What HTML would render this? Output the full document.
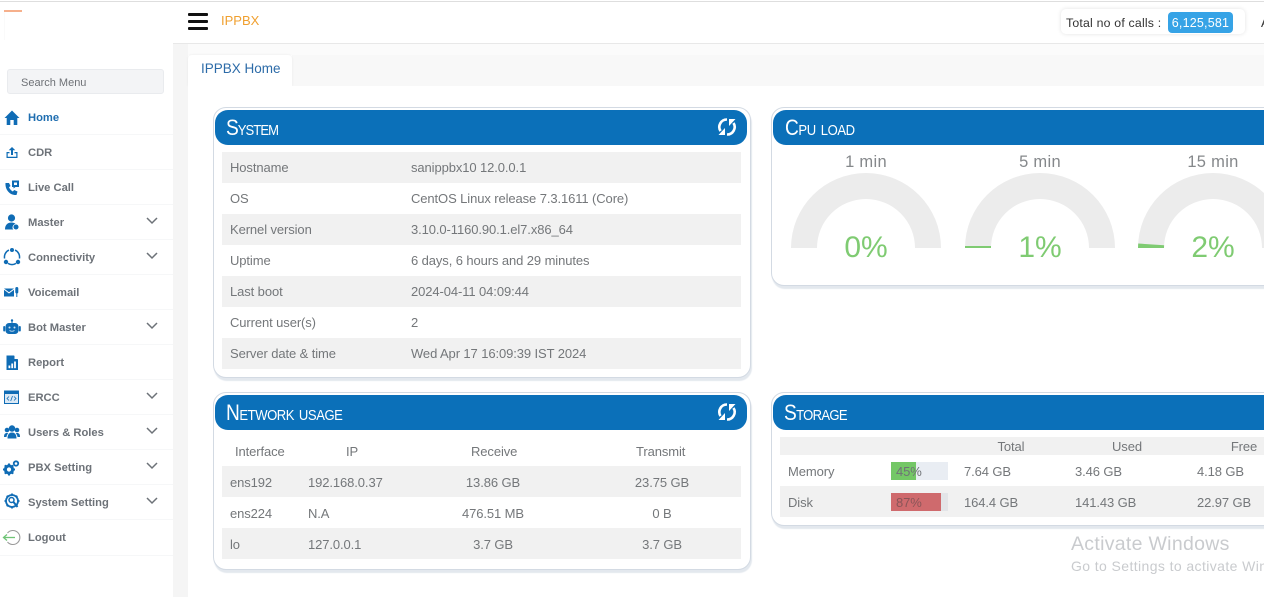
<!DOCTYPE html>
<html><head><meta charset="utf-8"><style>
html,body{margin:0;padding:0;width:1264px;height:597px;overflow:hidden;background:#fff;font-family:"Liberation Sans",sans-serif;color:#6f7276}
.a{position:absolute;white-space:nowrap}
#wrap{position:relative;width:1264px;height:597px;overflow:hidden}
.nav{position:absolute;left:28px;font-size:11.2px;font-weight:bold;color:#6d7278;line-height:14px;white-space:nowrap}
.sep{position:absolute;left:0;width:173px;height:1px;background:#f6f7f8}
.ico{position:absolute}
.panel{position:absolute;background:#fff;border:1px solid #d3dae3;border-radius:13px;box-shadow:1px 3px 1px #e3e8ee;box-sizing:border-box}
.head{position:absolute;background:#0b70b9;border-radius:13px;height:35px}
.title{position:absolute;color:#fff;font-size:22px;font-variant:small-caps;letter-spacing:-1.1px;line-height:24px;white-space:nowrap;transform:scaleX(.87);transform-origin:left center}
.row{position:absolute;height:31px}
.g{background:#f1f1f1}
.t{position:absolute;font-size:13px;line-height:18px;color:#74777a;white-space:nowrap;letter-spacing:-.1px}
.c{transform:translateX(-50%)}
.gl{position:absolute;font-size:16.5px;color:#85888b;white-space:nowrap;transform:translateX(-50%);line-height:20px;letter-spacing:.3px}
.gv{position:absolute;font-size:30px;color:#7fcb72;white-space:nowrap;transform:translateX(-50%);line-height:34px}
</style></head><body><div id="wrap">

<div class="a" style="left:0;top:1px;width:1264px;height:1px;background:#dedede"></div>
<div class="a" style="left:173px;top:43px;width:1091px;height:1px;background:#e8e8e8"></div>
<div class="a" style="left:173px;top:44px;width:15px;height:553px;background:#f5f5f5"></div>
<div class="a" style="left:188px;top:44px;width:1076px;height:11px;background:#fbfbfb"></div>
<div class="a" style="left:292px;top:55px;width:972px;height:31px;background:#f8f8f8"></div>
<div class="a" style="left:188px;top:55px;width:104px;height:31px;background:#fff;border-radius:4px 4px 0 0;box-shadow:0 0 2px #e8e8e8"></div>
<div class="a" style="left:201px;top:60px;font-size:13.5px;line-height:18px;color:#2c6ba8;letter-spacing:0">IPPBX Home</div>
<div class="a" style="left:188px;top:86px;width:1076px;height:511px;background:#fff"></div>

<!-- logo remnant -->
<div class="a" style="left:4px;top:10px;width:18px;height:2px;background:#f6b08c"></div>
<div class="a" style="left:4px;top:12px;width:1px;height:28px;background:#fafafa"></div>

<!-- hamburger -->
<div class="a" style="left:188px;top:13px;width:20px;height:3px;background:#111;border-radius:1px"></div>
<div class="a" style="left:188px;top:20px;width:20px;height:3px;background:#111;border-radius:1px"></div>
<div class="a" style="left:188px;top:27px;width:20px;height:3px;background:#111;border-radius:1px"></div>
<div class="a" style="left:221px;top:12px;font-size:13px;line-height:17px;color:#f0a030">IPPBX</div>

<!-- calls -->
<div class="a" style="left:1061px;top:9px;width:184px;height:25px;background:#fff;border-radius:5px;box-shadow:0 0 4px #e2e2e2"></div>
<div class="a" style="left:1066px;top:15px;font-size:12.3px;line-height:16px;color:#333;letter-spacing:.2px">Total no of calls :</div>
<div class="a" style="left:1168px;top:12px;width:65px;height:21px;background:#36a3e6;border-radius:4px;color:#fff;font-size:12.5px;line-height:22px;text-align:center;letter-spacing:.2px">6,125,581</div>
<div class="a" style="left:1261px;top:15px;font-size:12.5px;line-height:16px;color:#333">A</div>

<!-- search -->
<div class="a" style="left:7px;top:69px;width:157px;height:25px;box-sizing:border-box;background:#f3f4f6;border:1px solid #e9ebee;border-radius:3px"></div>
<div class="a" style="left:21px;top:76px;font-size:11px;line-height:14px;color:#6e7176">Search Menu</div>

<!-- nav -->
<div class="nav" style="top:111px;color:#1f6eb0">Home</div>
<div class="nav" style="top:146px">CDR</div>
<div class="nav" style="top:181px">Live Call</div>
<div class="nav" style="top:216px">Master</div>
<div class="nav" style="top:251px">Connectivity</div>
<div class="nav" style="top:286px">Voicemail</div>
<div class="nav" style="top:321px">Bot Master</div>
<div class="nav" style="top:356px">Report</div>
<div class="nav" style="top:391px">ERCC</div>
<div class="nav" style="top:426px">Users &amp; Roles</div>
<div class="nav" style="top:461px">PBX Setting</div>
<div class="nav" style="top:496px">System Setting</div>
<div class="nav" style="top:531px">Logout</div>
<div class="sep" style="top:134px"></div><div class="sep" style="top:169px"></div><div class="sep" style="top:204px"></div><div class="sep" style="top:239px"></div><div class="sep" style="top:274px"></div><div class="sep" style="top:309px"></div><div class="sep" style="top:344px"></div><div class="sep" style="top:379px"></div><div class="sep" style="top:414px"></div><div class="sep" style="top:449px"></div><div class="sep" style="top:484px"></div><div class="sep" style="top:519px"></div><div class="sep" style="top:555px"></div>

<svg class="ico" style="left:0;top:100px" width="28" height="460" viewBox="0 100 28 460" fill="#0f6cb5">
<!-- home -->
<path d="M12 110.5 L4.5 118 H6.7 V125 H10.3 V120 H13.7 V125 H17.3 V118 H19.5Z"/>
<!-- cdr -->
<path d="M12 147 L8.7 150.3 H11 V155 H13 V150.3 H15.3Z"/><path d="M6.5 152 H9.5 V153.2 H7.7 V156.8 H16.3 V153.2 H14.5 V152 H17.5 V158 H6.5Z"/>
<!-- live call -->
<path d="M5.5 183 C5 190 10 195.5 16.5 195 L17.5 191.5 L14.2 190 L12.8 191.5 C11 190.5 9.7 189 9 187.3 L10.5 186 L9 183Z"/><path d="M12 180.5 H19 V187 H15.5 L13.5 188.5 V187 H12Z M14 182.5 V185 H17 V182.5Z" fill-rule="evenodd"/>
<!-- master -->
<circle cx="11.5" cy="218" r="3.6"/><path d="M5 229.5 C5 224.5 8 222.500 11.5 222.500 C13 222.500 14.500 223 15.500 223.800 C13.500 224.500 12.500 226 12.500 227.500 C12.500 228.500 13 229.200 13.500 229.500Z"/><rect x="13.500" y="224.500" width="5" height="5" rx="2.400"/>
<!-- connectivity -->
<g fill="none" stroke="#0f6cb5" stroke-width="1.500"><path d="M9 250.100 A7.500 7.500 0 0 0 4.600 258.500"/><path d="M15 250.100 A7.500 7.500 0 0 1 19.400 258.500"/><path d="M8 263.400 A7.500 7.500 0 0 0 16 263.400"/></g><circle cx="12" cy="250" r="2"/><circle cx="6" cy="262" r="2.200"/><circle cx="18" cy="262" r="2.200"/>
<!-- voicemail -->
<path d="M4 288.500 H14 L9 292.300Z"/><path d="M4 289.700 L9 293.500 L14 289.700 V296.500 H4Z"/><rect x="15.300" y="287" width="3" height="6.500" rx="1.500"/><rect x="16.300" y="293" width="1" height="4"/>
<!-- bot -->
<circle cx="12" cy="320.500" r="1.200"/><rect x="11.500" y="321" width="1" height="2"/><rect x="5.500" y="323" width="13" height="11" rx="3.500"/><rect x="3.200" y="326" width="2" height="5.500" rx="1"/><rect x="18.800" y="326" width="2" height="5.500" rx="1"/><circle cx="9.500" cy="327.500" r="1" fill="#cfe3f3"/><circle cx="14.500" cy="327.500" r="1" fill="#cfe3f3"/><path d="M9.500 330.500 Q12 332 14.500 330.500" stroke="#cfe3f3" stroke-width=".8" fill="none"/>
<!-- report -->
<path d="M6.500 355.500 H14 L18 359.500 V370 H6.500Z"/><path d="M14.500 355.500 L18 359 H14.500Z" fill="#fff"/><rect x="8.500" y="365.500" width="1.800" height="2.700" fill="#fff"/><rect x="11.300" y="363.500" width="1.800" height="4.700" fill="#fff"/><rect x="14.100" y="361.500" width="1.800" height="6.700" fill="#fff"/>
<!-- ercc -->
<rect x="4.500" y="391" width="14" height="12.500" fill="#dbe9f5" stroke="#0f6cb5" stroke-width="1"/><rect x="4.500" y="391" width="14" height="3" fill="#0f6cb5"/><path d="M9 396.500 L7 398.500 L9 400.500 M14 396.500 L16 398.500 L14 400.500 M12.500 396 L10.700 401" fill="none" stroke="#0f6cb5" stroke-width=".8"/>
<!-- users -->
<circle cx="12" cy="428.500" r="3.200"/><circle cx="7" cy="430" r="2.300"/><circle cx="17" cy="430" r="2.300"/><path d="M7.500 438.500 C7.500 434 9.500 432.500 12 432.500 C14.500 432.500 16.500 434 16.500 438.500Z"/><path d="M4 437 C4 434 5 433 7 433 C7.500 433 8 433.100 8.300 433.400 C7.200 434.400 6.700 435.500 6.500 437Z"/><path d="M20 437 C20 434 19 433 17 433 C16.500 433 16 433.100 15.700 433.400 C16.800 434.400 17.300 435.500 17.500 437Z"/>
<!-- pbx -->
<circle cx="9" cy="469.500" r="3.600" fill="none" stroke="#0f6cb5" stroke-width="3"/><g stroke="#0f6cb5" stroke-width="2"><path d="M9 463.500 V465 M9 474 V475.500 M3 469.500 H4.500 M13.500 469.500 H15 M4.800 465.300 L6 466.500 M12 472.500 L13.200 473.700 M4.800 473.700 L6 472.500 M12 466.500 L13.200 465.300"/></g><circle cx="16" cy="463.500" r="2.200" fill="none" stroke="#0f6cb5" stroke-width="1.800"/>
<!-- system -->
<circle cx="12" cy="501" r="6" fill="none" stroke="#0f6cb5" stroke-width="1.800"/><g stroke="#0f6cb5" stroke-width="1.800"><path d="M12 493.500 V495 M12 507 V508.500 M4.500 501 H6 M18 501 H19.500 M6.700 495.700 L7.800 496.800 M16.200 505.200 L17.300 506.300 M6.700 506.300 L7.800 505.200 M16.200 496.800 L17.300 495.700"/></g><circle cx="11.500" cy="500" r="2.500" fill="none" stroke="#0f6cb5" stroke-width="1.500"/><path d="M13.500 502 L17.500 507" stroke="#0f6cb5" stroke-width="2"/>
<!-- logout -->
<path d="M7.500 533 A7 7 0 1 1 7.500 542" fill="none" stroke="#9a9a9a" stroke-width="1.100"/><path d="M3.500 537.500 H15" stroke="#6fc476" stroke-width="1.300"/><path d="M7 534.500 L3.500 537.500 L7 540.500" fill="none" stroke="#6fc476" stroke-width="1.300"/>
</svg>

<svg class="ico" style="left:140px;top:210px" width="24" height="300" viewBox="140 210 24 300" fill="none" stroke="#6d7278" stroke-width="1.500">
<path d="M147 218 L152 223 L157 218"/><path d="M147 253 L152 258 L157 253"/><path d="M147 323 L152 328 L157 323"/><path d="M147 393 L152 398 L157 393"/><path d="M147 428 L152 433 L157 428"/><path d="M147 463 L152 468 L157 463"/><path d="M147 498 L152 503 L157 498"/>
</svg>

<!-- System panel -->
<div class="panel" style="left:213px;top:107px;width:538px;height:271px"></div>
<div class="head" style="left:215px;top:110px;width:532px"></div>
<div class="title" style="left:226px;top:116px">System</div>
<div class="row g" style="left:222px;top:152px;width:519px"></div>
<div class="row g" style="left:222px;top:214px;width:519px"></div>
<div class="row g" style="left:222px;top:276px;width:519px"></div>
<div class="row g" style="left:222px;top:338px;width:519px"></div>
<div class="t" style="left:230px;top:159px">Hostname</div><div class="t" style="left:411px;top:159px">sanippbx10 12.0.0.1</div>
<div class="t" style="left:230px;top:190px">OS</div><div class="t" style="left:411px;top:190px">CentOS Linux release 7.3.1611 (Core)</div>
<div class="t" style="left:230px;top:221px">Kernel version</div><div class="t" style="left:411px;top:221px">3.10.0-1160.90.1.el7.x86_64</div>
<div class="t" style="left:230px;top:252px">Uptime</div><div class="t" style="left:411px;top:252px">6 days, 6 hours and 29 minutes</div>
<div class="t" style="left:230px;top:283px">Last boot</div><div class="t" style="left:411px;top:283px">2024-04-11 04:09:44</div>
<div class="t" style="left:230px;top:314px">Current user(s)</div><div class="t" style="left:411px;top:314px">2</div>
<div class="t" style="left:230px;top:345px">Server date &amp; time</div><div class="t" style="left:411px;top:345px">Wed Apr 17 16:09:39 IST 2024</div>

<svg class="ico" style="left:716px;top:116px" width="22" height="22" viewBox="0 0 22 22" fill="none" stroke="#fff" stroke-width="2.600">
<path d="M11 3.500 A7.500 7.500 0 0 0 4.500 15"/><path d="M11 18.500 A7.500 7.500 0 0 0 17.500 7"/><path d="M9 12 V19 H2.500Z" stroke="none" fill="#fff"/><path d="M13 10 V3 H19.500Z" stroke="none" fill="#fff"/>
</svg>

<!-- Network panel -->
<div class="panel" style="left:213px;top:392px;width:538px;height:178px"></div>
<div class="head" style="left:215px;top:395px;width:532px"></div>
<div class="title" style="left:226px;top:401px;letter-spacing:-.5px">Network usage</div>
<svg class="ico" style="left:716px;top:401px" width="22" height="22" viewBox="0 0 22 22" fill="none" stroke="#fff" stroke-width="2.600">
<path d="M11 3.500 A7.500 7.500 0 0 0 4.500 15"/><path d="M11 18.500 A7.500 7.500 0 0 0 17.500 7"/><path d="M9 12 V19 H2.500Z" stroke="none" fill="#fff"/><path d="M13 10 V3 H19.500Z" stroke="none" fill="#fff"/>
</svg>
<div class="t" style="left:235px;top:443px">Interface</div><div class="t" style="left:346px;top:443px">IP</div><div class="t" style="left:471px;top:443px">Receive</div><div class="t" style="left:636px;top:443px">Transmit</div>
<div class="row g" style="left:222px;top:466px;width:519px"></div>
<div class="row g" style="left:222px;top:528px;width:519px"></div>
<div class="t" style="left:230px;top:474px">ens192</div><div class="t" style="left:308px;top:474px">192.168.0.37</div><div class="t c" style="left:493px;top:474px">13.86 GB</div><div class="t c" style="left:662px;top:474px">23.75 GB</div>
<div class="t" style="left:230px;top:505px">ens224</div><div class="t" style="left:308px;top:505px">N.A</div><div class="t c" style="left:493px;top:505px">476.51 MB</div><div class="t c" style="left:662px;top:505px">0 B</div>
<div class="t" style="left:230px;top:536px">lo</div><div class="t" style="left:308px;top:536px">127.0.0.1</div><div class="t c" style="left:493px;top:536px">3.7 GB</div><div class="t c" style="left:662px;top:536px">3.7 GB</div>

<!-- CPU panel -->
<div class="panel" style="left:771px;top:107px;width:520px;height:179px"></div>
<div class="head" style="left:773px;top:110px;width:520px"></div>
<div class="title" style="left:785px;top:116px;letter-spacing:-.45px">Cpu load</div>
<div class="gl" style="left:866px;top:152px">1 min</div>
<div class="gl" style="left:1040px;top:152px">5 min</div>
<div class="gl" style="left:1213px;top:152px">15 min</div>
<svg class="ico" style="left:780px;top:165px" width="484" height="90" viewBox="780 165 484 90">
<path d="M791 248 A75 75 0 0 1 941 248 H915 A49 49 0 0 0 817 248Z" fill="#ececec"/>
<path d="M965 248 A75 75 0 0 1 1115 248 H1089 A49 49 0 0 0 991 248Z" fill="#ececec"/>
<rect x="965" y="246" width="26" height="2" fill="#7fcb72"/>
<path d="M1138 248 A75 75 0 0 1 1288 248 H1262 A49 49 0 0 0 1164 248Z" fill="#ececec"/>
<path d="M1138 248 L1138.200 243.500 L1164.100 245.300 L1164 248Z" fill="#7fcb72"/>
</svg>
<div class="gv" style="left:866px;top:231px">0%</div>
<div class="gv" style="left:1040px;top:231px">1%</div>
<div class="gv" style="left:1213px;top:231px">2%</div>

<!-- Storage panel -->
<div class="panel" style="left:771px;top:392px;width:520px;height:134px"></div>
<div class="head" style="left:773px;top:395px;width:520px"></div>
<div class="title" style="left:784px;top:401px;letter-spacing:-.77px">Storage</div>
<div class="a" style="left:780px;top:437px;width:484px;height:18px;background:#f1f1f1"></div>
<div class="a" style="left:780px;top:486px;width:484px;height:31px;background:#f1f1f1"></div>
<div class="t c" style="left:1011px;top:438px">Total</div><div class="t c" style="left:1127px;top:438px">Used</div><div class="t c" style="left:1244px;top:438px">Free</div>
<div class="t" style="left:788px;top:463px">Memory</div><div class="t" style="left:788px;top:494px">Disk</div>
<div class="a" style="left:891px;top:462px;width:57px;height:18px;background:#e9edf3"></div>
<div class="a" style="left:891px;top:462px;width:25px;height:18px;background:#74c766"></div>
<div class="a" style="left:891px;top:493px;width:57px;height:18px;background:#e3e5e8"></div>
<div class="a" style="left:891px;top:493px;width:50px;height:18px;background:#cf6a6d"></div>
<div class="t" style="left:896px;top:463px;color:#6f7276;font-size:13px">45%</div><div class="t" style="left:896px;top:494px;color:#8a5558;font-size:13px">87%</div>
<div class="t" style="left:964px;top:463px">7.64 GB</div><div class="t" style="left:1075px;top:463px">3.46 GB</div><div class="t" style="left:1197px;top:463px">4.18 GB</div>
<div class="t" style="left:964px;top:494px">164.4 GB</div><div class="t" style="left:1075px;top:494px">141.43 GB</div><div class="t" style="left:1197px;top:494px">22.97 GB</div>

<!-- watermark -->
<div class="a" style="left:1071px;top:532px;font-size:19.500px;line-height:24px;color:#c9cbce;letter-spacing:.3px">Activate Windows</div>
<div class="a" style="left:1071px;top:557px;font-size:14px;line-height:18px;color:#c9cbce;letter-spacing:.4px">Go to Settings to activate Windows.</div>
</div></body></html>
